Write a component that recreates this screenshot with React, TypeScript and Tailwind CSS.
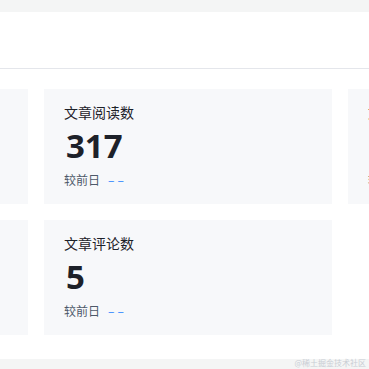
const stats = [
  { title: '文章展现数', value: '1,024' },
  { title: '文章阅读数', value: '317' },
  { title: '文章点赞数', value: '12' },
  { title: '文章收藏数', value: '8' },
  { title: '文章评论数', value: '5' },
];

function StatCard({ title, value }: { title: string; value: string }) {
  return (
    <div className="w-[288px] shrink-0 bg-[#f7f8fa] pl-5 pt-3 pb-[14px]">
      <div className="text-[14px] leading-[22px] text-[#1d2129]">{title}</div>
      <div className="mt-[3px] pl-[2px] text-[33px] leading-[40px] font-bold text-[#1d2129] [font-family:'Open_Sans',sans-serif]">
        {value}
      </div>
      <div className="mt-[4px] flex items-center text-[12px] leading-[20px] text-[#4e5969]">
        <span>较前日</span>
        <span className="ml-[8px] tracking-[3px] text-[#1e80ff]">––</span>
      </div>
    </div>
  );
}

export default function App() {
  return (
    <div className="relative h-[369px] w-[369px] overflow-hidden bg-[#f4f5f5] pt-3 [font-family:'Noto_Sans_CJK_SC',sans-serif]">
      <div className="bg-white pb-6">
        <div className="h-[57px] border-b border-[#e4e6eb]" />
        <div className="ml-[-260px] mt-5 grid w-[896px] grid-cols-[288px_288px_288px] gap-4">
          {stats.map((s) => (
            <StatCard key={s.title} title={s.title} value={s.value} />
          ))}
        </div>
      </div>
      <span className="absolute bottom-[1px] right-[3px] text-[8px] leading-[10px] text-[#c9cdd4]">
        @稀土掘金技术社区
      </span>
    </div>
  );
}
